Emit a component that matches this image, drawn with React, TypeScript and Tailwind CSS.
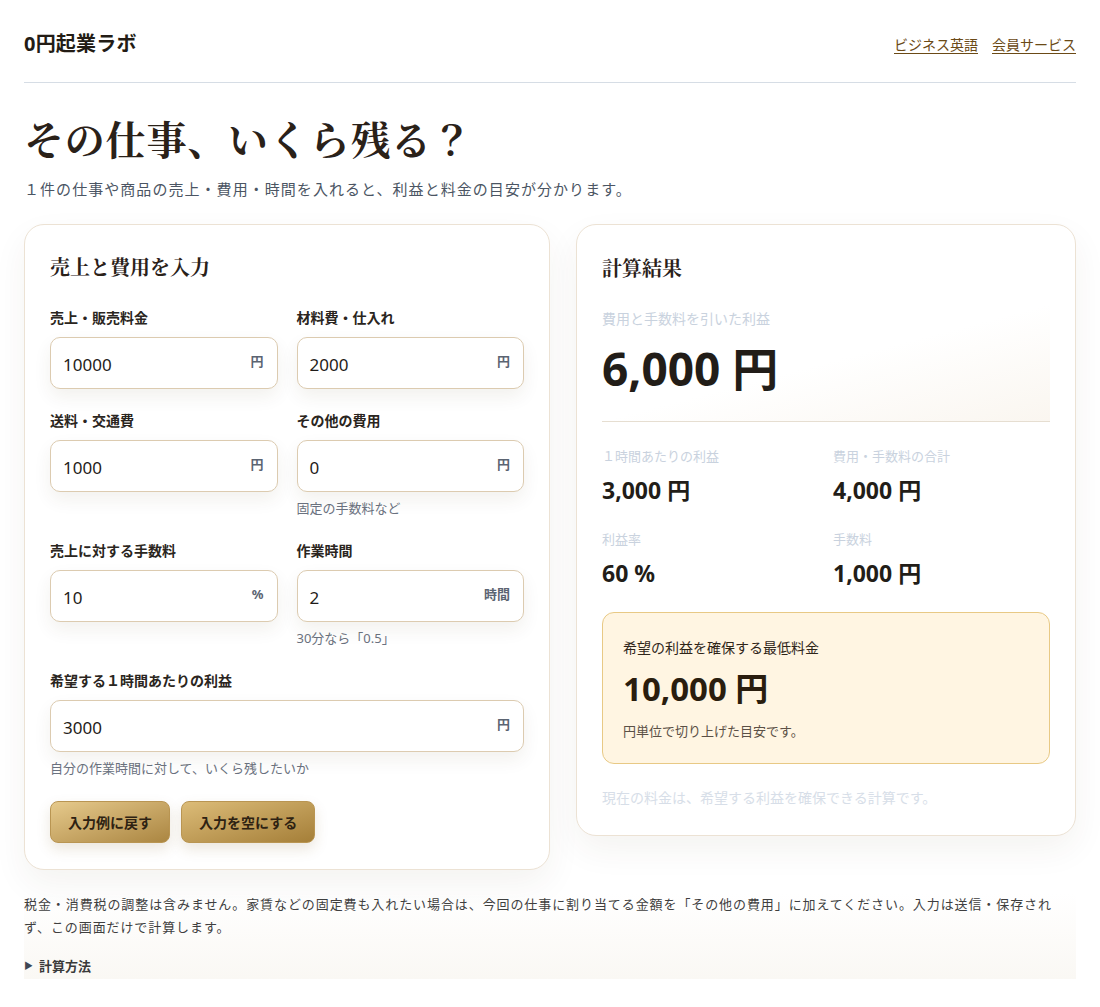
import React from "react";

const sans = "font-['Noto_Sans','Noto_Sans_CJK_JP',sans-serif]";
const serif = "font-['Noto_Serif_CJK_JP','Noto_Serif_JP','Noto_Sans_CJK_JP',serif]";

type FieldProps = {
  label: string;
  value: string;
  unit: string;
  help?: string;
  className?: string;
};

function Field({ label, value, unit, help, className }: FieldProps) {
  return (
    <div className={className}>
      <div className="text-[14px] leading-[20px] font-bold text-[#2a2520]">{label}</div>
      <div className="mt-[9px] relative h-[52px] rounded-[10px] border border-[#dccbb0] bg-white shadow-[0_8px_18px_rgba(70,50,20,0.07)] flex items-center px-[12px] pt-[3px]">
        <span className="text-[17px] text-[#1f1c19]">{value}</span>
        <span className="absolute right-[13px] top-[14px] text-[13px] font-bold text-[#5b6472]">{unit}</span>
      </div>
      {help && <div className="mt-[7px] pb-[2px] text-[13px] leading-[18px] text-[#6b7280]">{help}</div>}
    </div>
  );
}

function Stat({ label, value }: { label: string; value: string }) {
  return (
    <div>
      <div className="text-[13px] leading-[18px] text-[#c9d2de]">{label}</div>
      <div className="mt-[10px] text-[23px] leading-[30px] font-bold text-[#221d18]">{value}</div>
    </div>
  );
}

export default function App() {
  return (
    <div className={`${sans} bg-white min-h-[1007px] px-[24px] text-[#2a2520]`}>
      <header className="h-[83px] pt-[6px] flex items-center justify-between border-b border-[#d6dde5]">
        <div className="text-[20px] font-bold text-[#231c15] tracking-[0.01em]">0円起業ラボ</div>
        <nav className="flex gap-[14px] text-[14px] text-[#6b4a16]">
          <a className="underline underline-offset-[3px]">ビジネス英語</a>
          <a className="underline underline-offset-[3px]">会員サービス</a>
        </nav>
      </header>

      <h1 className={`${serif} mt-[30px] text-[40px] leading-[50px] font-bold text-[#2a2119] tracking-[0.02em]`}>
        その仕事、いくら残る？
      </h1>
      <p className="mt-[15px] text-[15px] leading-[22px] text-[#4b5563] tracking-[0.07em]">
        １件の仕事や商品の売上・費用・時間を入れると、利益と料金の目安が分かります。
      </p>

      <div className="mt-[24px] grid grid-cols-[526px_500px] gap-[26px] items-start">
        {/* input card */}
        <section className="rounded-[20px] border border-[#ece2d4] bg-white shadow-[0_14px_34px_rgba(70,50,20,0.06)] px-[25px] pt-[28px] pb-[26px]">
          <h2 className={`${serif} text-[20px] leading-[28px] font-bold text-[#2a2119]`}>売上と費用を入力</h2>
          <div className="mt-[27px] grid grid-cols-2 gap-x-[19px] gap-y-[22px] items-start">
            <Field label="売上・販売料金" value="10000" unit="円" />
            <Field label="材料費・仕入れ" value="2000" unit="円" />
            <Field label="送料・交通費" value="1000" unit="円" />
            <Field label="その他の費用" value="0" unit="円" help="固定の手数料など" />
            <Field label="売上に対する手数料" value="10" unit="%" />
            <Field label="作業時間" value="2" unit="時間" help="30分なら「0.5」" />
            <Field
              className="col-span-2"
              label="希望する１時間あたりの利益"
              value="3000"
              unit="円"
              help="自分の作業時間に対して、いくら残したいか"
            />
          </div>
          <div className="mt-[22px] flex gap-[11px]">
            <button className="h-[42px] px-[17px] rounded-[8px] border border-[#b99552] bg-gradient-to-br from-[#e6ca8c] to-[#ab8641] text-[14px] font-bold text-[#2e2212] shadow-[0_6px_14px_rgba(120,90,30,0.15)]">
              入力例に戻す
            </button>
            <button className="h-[42px] px-[17px] rounded-[8px] border border-[#b99552] bg-gradient-to-br from-[#dcbc78] to-[#a57f38] text-[14px] font-bold text-[#2e2212] shadow-[0_6px_14px_rgba(120,90,30,0.15)]">
              入力を空にする
            </button>
          </div>
        </section>

        {/* result card */}
        <section className="rounded-[20px] border border-[#ece2d4] bg-white shadow-[0_14px_34px_rgba(70,50,20,0.06)] px-[25px] pt-[29px] pb-[27px]">
          <h2 className={`${serif} text-[20px] leading-[28px] font-bold text-[#2a2119]`}>計算結果</h2>
          <div className="mt-[22px] border-b border-[#e6ded1] bg-gradient-to-br from-white from-50% to-[#faf6f0] pt-[5px] pb-[24px]">
            <div className="text-[14px] leading-[20px] text-[#c9d2de]">費用と手数料を引いた利益</div>
            <div className="mt-[10px] text-[46px] leading-[58px] font-bold text-[#221d18]">6,000 円</div>
          </div>
          <div className="mt-[25px] grid grid-cols-2 gap-x-[14px] gap-y-[25px]">
            <Stat label="１時間あたりの利益" value="3,000 円" />
            <Stat label="費用・手数料の合計" value="4,000 円" />
            <Stat label="利益率" value="60 %" />
            <Stat label="手数料" value="1,000 円" />
          </div>
          <div className="mt-[24px] rounded-[12px] border border-[#e8c985] bg-[#fff5e2] px-[20px] pt-[25px] pb-[23px]">
            <div className="text-[14px] leading-[20px] text-[#2f2519]">希望の利益を確保する最低料金</div>
            <div className="mt-[11px] text-[33px] leading-[40px] font-bold text-[#2a1d0e]">10,000 円</div>
            <div className="mt-[13px] text-[13px] leading-[18px] text-[#5b5046]">円単位で切り上げた目安です。</div>
          </div>
          <div className="mt-[24px] text-[14px] leading-[20px] text-[#d7dee8]">
            現在の料金は、希望する利益を確保できる計算です。
          </div>
        </section>
      </div>

      <div className="mt-[23px] bg-gradient-to-b from-white to-[#faf8f4] pb-[4px]">
        <p className="text-[13px] leading-[23px] text-[#3f3f3f] tracking-[0.07em]">
          税金・消費税の調整は含みません。家賃などの固定費も入れたい場合は、今回の仕事に割り当てる金額を「その他の費用」に加えてください。入力は送信・保存されず、この画面だけで計算します。
        </p>
        <div className="mt-[18px] flex items-center gap-[6px] text-[13px] leading-[18px] font-bold text-[#3a3a3a]">
          <span className="text-[9px] text-[#3e4654]">▶</span>
          <span>計算方法</span>
        </div>
      </div>
    </div>
  );
}
